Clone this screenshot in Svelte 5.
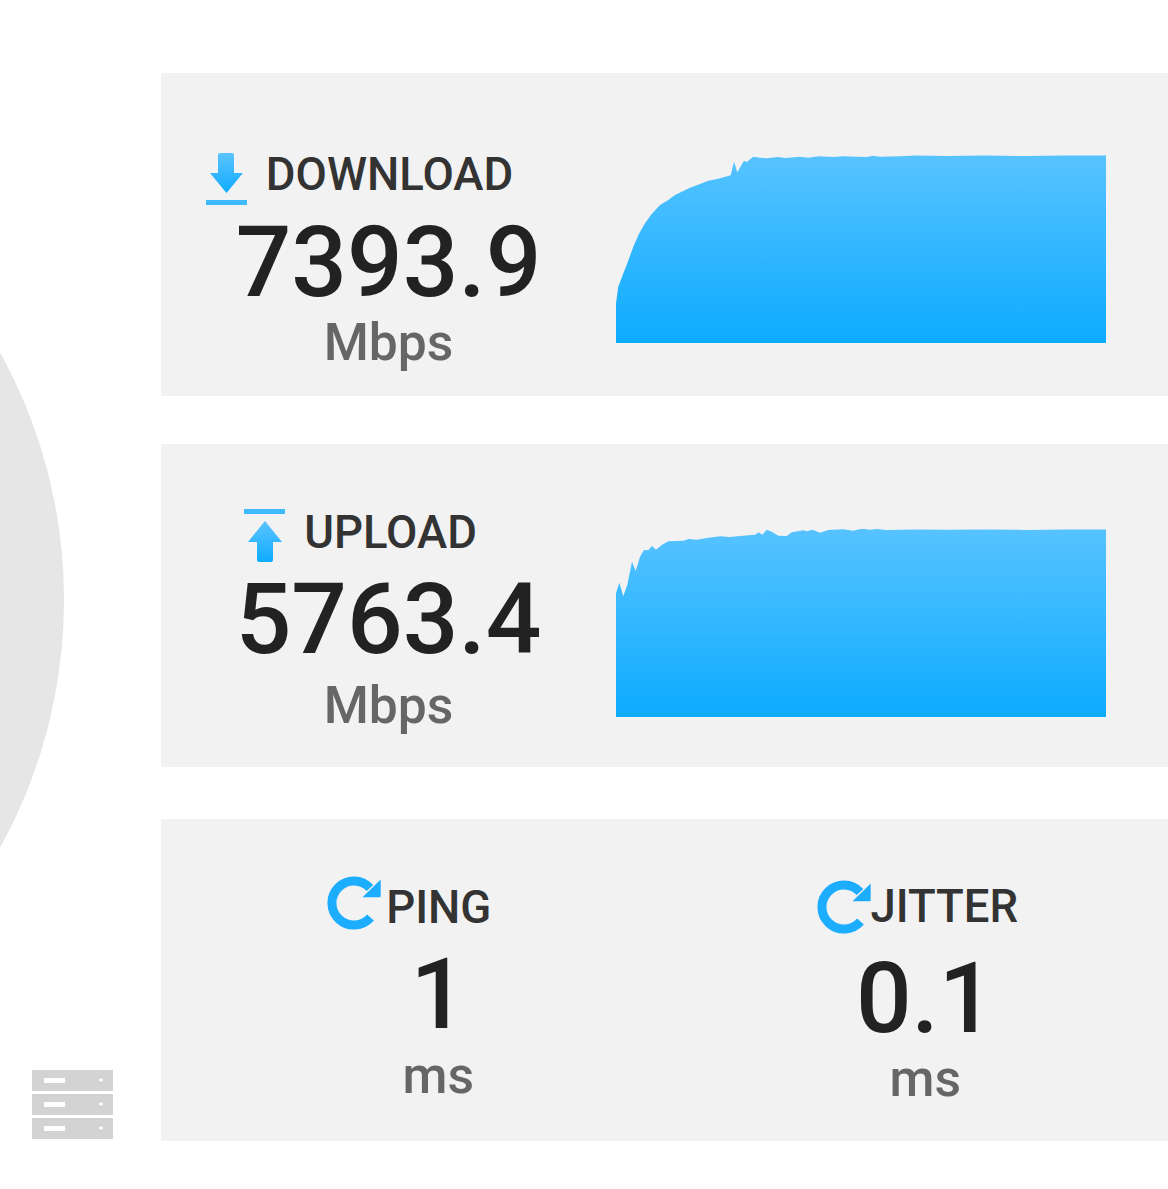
<script>
  const toPath = (pts, ox, oy, tail) => {
    const line = [...pts.map(([x, y]) => [x / 3 + ox, y / 3 + oy]), ...tail];
    return `M0 188L0 ${line[0][1].toFixed(1)}` + line.map(([x, y]) => `L${x.toFixed(1)} ${y.toFixed(1)}`).join('') + 'L490 188Z';
  };
  const dl = [[48,490],[55,440],[68,405],[82,370],[100,320],[118,280],[135,250],[155,222],[180,195],[205,180],[225,165],[245,155],[270,143],[300,132],[325,122],[355,116],[392,106],[402,65],[412,97],[432,62],[440,66],[460,50],[480,53],[500,55],[535,51],[555,54],[600,50],[625,53],[655,49],[700,51],[730,49],[770,50],[800,51],[820,47],[840,50],[900,49]];
  const ul = [[48,235],[58,203],[70,243],[82,210],[96,140],[107,168],[120,125],[132,105],[145,106],[156,93],[168,104],[185,90],[205,79],[250,77],[265,72],[290,74],[320,69],[360,64],[390,66],[420,63],[465,59],[476,52],[487,59],[500,44],[515,50],[535,62],[560,63],[575,52],[610,46],[620,49],[637,44],[660,53],[685,45],[730,43],[760,47],[785,41],[810,44],[830,42],[860,45],[900,44]];
  const dlPath = toPath(dl, -16, -15, [[300,0.6],[330,1],[370,0.6],[410,1],[450,0.5],[490,0.5]]);
  const ulPath = toPath(ul, -16, -14, [[300,0.6],[330,0.8],[370,0.5],[410,0.9],[450,0.4],[490,0.6]]);
</script>

<svg class="defs" width="0" height="0" aria-hidden="true">
  <defs>
    <linearGradient id="chartFill" x1="0" y1="0" x2="0" y2="1">
      <stop offset="0" stop-color="#57c3ff" />
      <stop offset="1" stop-color="#0dabff" />
    </linearGradient>
    <linearGradient id="arrowFill" x1="0" y1="0" x2="0" y2="1">
      <stop offset="0" stop-color="#5bc4ff" />
      <stop offset="1" stop-color="#0fabff" />
    </linearGradient>
  </defs>
</svg>

<div class="page">
  <aside class="side">
    <div class="dial"></div>
    <svg class="server" width="81" height="69" viewBox="0 0 81 69">
      <g fill="#d3d3d3">
        <rect x="0" y="0" width="81" height="21" />
        <rect x="0" y="24" width="81" height="21" />
        <rect x="0" y="48" width="81" height="21" />
      </g>
      <g fill="#fff">
        <rect x="12" y="8" width="21" height="5" />
        <rect x="12" y="32" width="21" height="5" />
        <rect x="12" y="56" width="21" height="5" />
        <circle cx="69" cy="10" r="1.8" />
        <circle cx="69" cy="34" r="1.8" />
        <circle cx="69" cy="58" r="1.8" />
      </g>
    </svg>
  </aside>

  <main class="panels">
    <section class="panel speed dl">
      <div class="metric">
        <div class="head">
          <svg class="ic" width="42" height="54" viewBox="0 0 42 54">
            <path fill="url(#arrowFill)" d="M12 3a2 2 0 0 1 2-2h12a2 2 0 0 1 2 2v18h9L20.5 41 4 21h8Z" />
            <rect x="0" y="48" width="41" height="5" fill="#3fbaff" />
          </svg>
          <span class="label">DOWNLOAD</span>
        </div>
        <div class="value">7393.9</div>
        <div class="unit">Mbps</div>
      </div>
      <svg class="chart" width="490" height="188" viewBox="0 0 490 188"><path d={dlPath} fill="url(#chartFill)" /></svg>
    </section>

    <section class="panel speed ul">
      <div class="metric">
        <div class="head">
          <svg class="ic" width="42" height="54" viewBox="0 0 42 54">
            <rect x="0" y="0" width="41" height="5" fill="#3fbaff" />
            <path fill="url(#arrowFill)" d="M21 12 38 33h-9v18a2 2 0 0 1-2 2H15a2 2 0 0 1-2-2V33H4Z" />
          </svg>
          <span class="label">UPLOAD</span>
        </div>
        <div class="value">5763.4</div>
        <div class="unit">Mbps</div>
      </div>
      <svg class="chart" width="490" height="188" viewBox="0 0 490 188"><path d={ulPath} fill="url(#chartFill)" /></svg>
    </section>

    <section class="panel latency">
      <div class="cell ping">
        <div class="head">
          <svg width="56" height="56" viewBox="0 0 56 56" class="rf">
            <path d="M45.5 43.5A22 22 0 1 1 45 14" fill="none" stroke="#1cadff" stroke-width="9" />
            <path d="M55.7 5.5V22a1.3 1.3 0 0 1-1.3 1.3H37.5Z" fill="#1cadff" />
          </svg>
          <span class="label">PING</span>
        </div>
        <div class="value">1</div>
        <div class="unit">ms</div>
      </div>
      <div class="cell jitter">
        <div class="head">
          <svg width="56" height="56" viewBox="0 0 56 56" class="rf">
            <path d="M45.5 43.5A22 22 0 1 1 45 14" fill="none" stroke="#1cadff" stroke-width="9" />
            <path d="M55.7 5.5V22a1.3 1.3 0 0 1-1.3 1.3H37.5Z" fill="#1cadff" />
          </svg>
          <span class="label">JITTER</span>
        </div>
        <div class="value">0.1</div>
        <div class="unit">ms</div>
      </div>
    </section>
  </main>
</div>

<style>
  :global(body) {
    margin: 0;
    background: #fff;
    overflow: hidden;
  }
  .defs {
    position: absolute;
  }
  .page {
    display: flex;
    height: 1189px;
    width: 1168px;
    overflow: hidden;
    font-family: Roboto, "Liberation Sans", sans-serif;
  }
  .side {
    position: relative;
    width: 161px;
    flex: none;
    display: flex;
    flex-direction: column;
    justify-content: flex-end;
    padding: 0 0 50px 32px;
    box-sizing: border-box;
  }
  .dial {
    position: absolute;
    left: -960px;
    top: 88px;
    width: 1024px;
    height: 1024px;
    border-radius: 50%;
    background: #e6e6e6;
  }
  .server {
    position: relative;
    display: block;
  }
  .panels {
    flex: 1;
    padding-top: 73px;
    display: flex;
    flex-direction: column;
  }
  .panel {
    background: #f2f2f2;
    height: 323px;
    box-sizing: border-box;
  }
  .panel.ul {
    margin-top: 48px;
  }
  .latency {
    margin-top: 52px;
    height: 322px;
    display: grid;
    grid-template-columns: 1fr 1fr;
  }
  .speed {
    display: flex;
    padding-right: 62px;
  }
  .metric {
    width: 455px;
    flex: none;
    display: flex;
    flex-direction: column;
    align-items: center;
  }
  .dl .metric { padding-top: 79px; }
  .ul .metric { padding-top: 65px; }
  .head {
    display: flex;
    align-items: center;
    height: 54px;
  }
  .metric .head {
    gap: 18px;
  }
  .dl .head { margin-right: 58px; }
  .ul .head { margin-right: 56px; }
  .dl .label { margin-top: -8px; }
  .ul .label { margin-top: -6px; }
  .ping .label { margin-top: 12px; }
  .jitter .label { margin-top: 2px; }
  .label {
    font-size: 45.5px;
    font-weight: 500;
    line-height: 54px;
    color: #333;
    white-space: nowrap;
  }
  .value {
    font-size: 98px;
    font-weight: 500;
    line-height: 100px;
    color: #222;
  }
  .metric .value { margin-top: 7px; }
  .cell .value { margin-top: 16px; }
  .unit {
    font-size: 51.6px;
    font-weight: 500;
    line-height: 56px;
    color: #666;
  }
  .dl .unit { margin-top: 2px; }
  .ul .unit { margin-top: 8px; }
  .ping .unit { margin-top: 3px; }
  .jitter .unit { margin-top: 2px; }
  .chart {
    display: block;
    flex: none;
    margin-top: 82px;
  }
  .ul .chart {
    margin-top: 85px;
  }
  .cell {
    display: flex;
    flex-direction: column;
    align-items: center;
  }
  .ping { padding-top: 56px; }
  .jitter { padding-top: 60px; }
  .ping .value, .ping .unit {
    margin-left: 51px;
  }
  .jitter .value, .jitter .unit {
    margin-left: 18px;
  }
  .ping .head { margin-right: 7px; }
  .jitter .head { margin-left: 3px; }
  .rf { flex: none; margin-left: -2px; margin-right: 5px; }
  .jitter .rf { margin-right: -1px; }
</style>
